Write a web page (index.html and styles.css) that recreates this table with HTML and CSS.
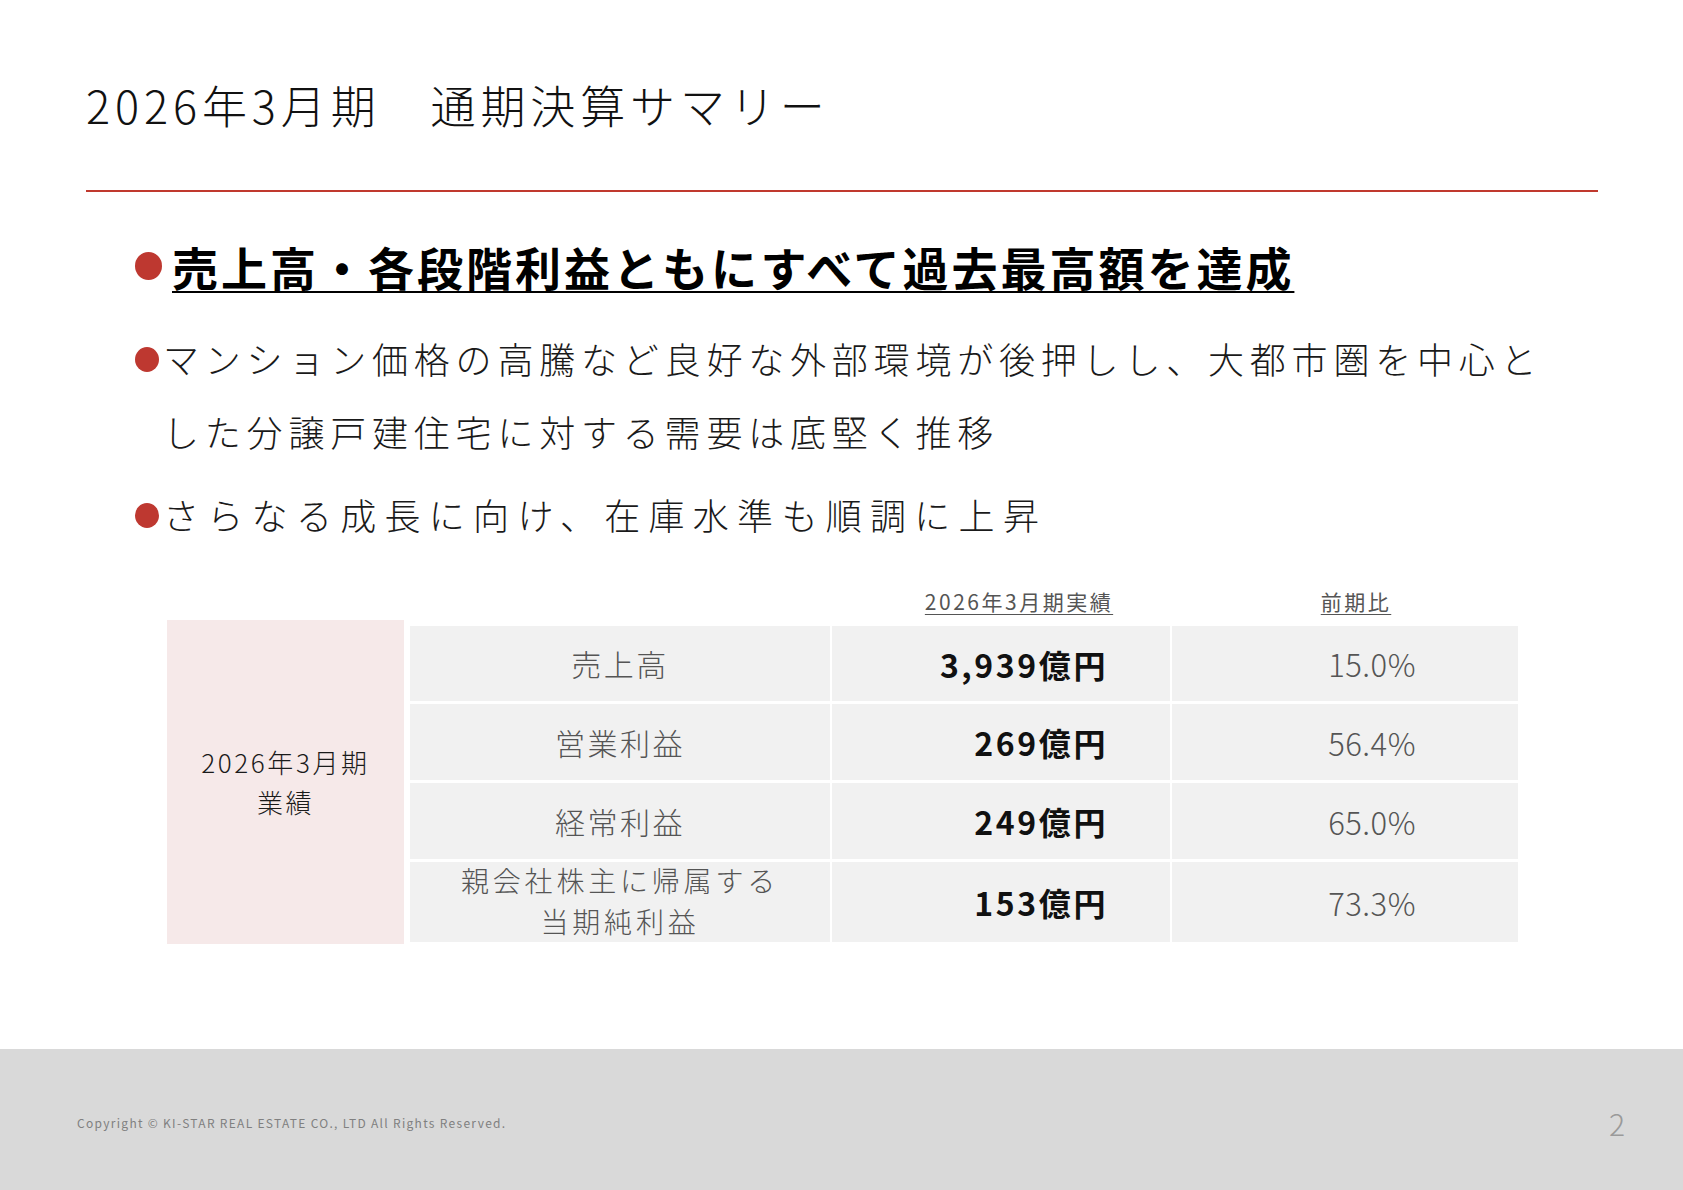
FILE: index.html
```html
<!DOCTYPE html>
<html lang="ja">
<head>
<meta charset="utf-8">
<title>2026年3月期 通期決算サマリー</title>
<link rel="stylesheet" href="styles.css">
</head>
<body>
<div class="slide">
  <header class="slide-header">
    <h1 class="title">2026年3月期　通期決算サマリー</h1>
    <div class="rule"></div>
  </header>

  <main class="content">
    <h2 class="headline"><span class="dot dot-lg"></span><span class="headline-text">売上高・各段階利益ともにすべて過去最高額を達成</span></h2>

    <ul class="points">
      <li class="point"><span class="dot dot-sm"></span><span class="point-text">マンション価格の高騰など良好な外部環境が後押しし、大都市圏を中心とした分譲戸建住宅に対する需要は底堅く推移</span></li>
      <li class="point point-wide"><span class="dot dot-sm"></span><span class="point-text">さらなる成長に向け、在庫水準も順調に上昇</span></li>
    </ul>

    <div class="results">
      <div class="results-head">
        <span class="col-head col-head-value">2026年3月期実績</span>
        <span class="col-head col-head-ratio">前期比</span>
      </div>
      <div class="results-body">
        <div class="period-cell">2026年3月期<br>業績</div>
        <div class="grid">
          <div class="cell label">売上高</div>
          <div class="cell value">3,939億円</div>
          <div class="cell ratio">15.0%</div>

          <div class="cell label">営業利益</div>
          <div class="cell value">269億円</div>
          <div class="cell ratio">56.4%</div>

          <div class="cell label">経常利益</div>
          <div class="cell value">249億円</div>
          <div class="cell ratio">65.0%</div>

          <div class="cell label label-2">親会社株主に帰属する<br>当期純利益</div>
          <div class="cell value">153億円</div>
          <div class="cell ratio">73.3%</div>
        </div>
      </div>
    </div>
  </main>

  <footer class="slide-footer">
    <span class="copyright">Copyright © KI-STAR REAL ESTATE CO., LTD All Rights Reserved.</span>
    <span class="page-no">2</span>
  </footer>
</div>
</body>
</html>
```

FILE: styles.css
```css
* { box-sizing: border-box; }

html, body {
  margin: 0;
  padding: 0;
  background: #ffffff;
}

body {
  font-family: "Noto Sans CJK JP", "Noto Sans", sans-serif;
  color: #111;
}

.slide {
  width: 1683px;
  height: 1190px;
  display: flex;
  flex-direction: column;
  overflow: hidden;
}

/* header */
.slide-header {
  padding: 75px 85px 0 86px;
}

.title {
  margin: 0;
  font-size: 45px;
  line-height: 60px;
  font-weight: 300;
  letter-spacing: 4.9px;
  color: #111;
}

.rule {
  margin-top: 55px;
  height: 2px;
  background: #c0392e;
}

/* content */
.content {
  padding: 0 0 0 135px;
}

.headline {
  margin: 44px 0 0 0;
  display: flex;
  align-items: center;
  font-size: 46px;
  line-height: 60px;
  font-weight: 700;
  letter-spacing: 3px;
  color: #000;
}

.dot {
  display: inline-block;
  border-radius: 50%;
  background: #be3830;
  flex: none;
}

.dot-lg {
  width: 27px;
  height: 28px;
  margin-right: 10px;
}

.headline-text {
  text-decoration: underline;
  text-decoration-thickness: 2px;
  text-underline-offset: 5px;
}

.points {
  list-style: none;
  margin: 26px 0 0 0;
  padding: 0;
}

.point {
  display: flex;
  align-items: flex-start;
  font-size: 36px;
  line-height: 73px;
  font-weight: 300;
  letter-spacing: 5.8px;
  color: #1a1a1a;
  width: 1430px;
}

.point + .point {
  margin-top: 10px;
}

.point-wide {
  letter-spacing: 8.3px;
}

.dot-sm {
  width: 24px;
  height: 25px;
  margin-top: 25px;
  margin-right: 4px;
}

/* table */
.results {
  margin: 35px 0 0 32px;
  width: 1351px;
}

.results-head {
  display: grid;
  grid-template-columns: 243px 422px 340px 346px;
  font-size: 21px;
  line-height: 30px;
  color: #555;
  letter-spacing: 2.5px;
}

.col-head {
  text-decoration: underline;
  text-decoration-thickness: 1px;
  text-underline-offset: 4px;
  text-align: center;
}

.col-head-value {
  grid-column: 3;
  padding-left: 34px;
}

.col-head-ratio {
  grid-column: 4;
  padding-left: 22px;
}

.results-body {
  margin-top: 4px;
  display: flex;
  align-items: flex-start;
}

.period-cell {
  width: 237px;
  height: 324px;
  margin-right: 6px;
  background: #f6e9e9;
  display: flex;
  align-items: center;
  justify-content: center;
  text-align: center;
  font-size: 26px;
  line-height: 40px;
  letter-spacing: 2.6px;
  font-weight: 300;
  color: #1a1a1a;
}

.grid {
  margin-top: 6px;
  display: grid;
  grid-template-columns: 420px 338px 346px;
  grid-template-rows: 75px 76px 76px 80px;
  column-gap: 2px;
  row-gap: 3px;
}

.cell {
  background: #f1f1f1;
  display: flex;
  align-items: center;
}

.label {
  justify-content: center;
  text-align: center;
  font-size: 30px;
  line-height: 39px;
  font-weight: 300;
  letter-spacing: 2.5px;
  color: #555;
}

.label-2 {
  font-size: 28px;
  line-height: 41px;
  letter-spacing: 3.8px;
  padding-bottom: 2px;
}

.value {
  justify-content: flex-end;
  padding-right: 62px;
  font-size: 32px;
  font-weight: 700;
  letter-spacing: 2.6px;
  color: #111;
}

.ratio {
  justify-content: flex-end;
  padding-right: 102px;
  font-size: 31px;
  font-weight: 300;
  letter-spacing: 0.5px;
  color: #555;
}

/* footer */
.slide-footer {
  margin-top: auto;
  height: 141px;
  background: #d9d9d9;
  display: flex;
  align-items: center;
  justify-content: space-between;
  padding: 6px 58px 0 77px;
}

.copyright {
  font-size: 12px;
  letter-spacing: 1.3px;
  color: #808080;
}

.page-no {
  font-size: 30px;
  font-weight: 300;
  color: #9a9a9a;
}
```
